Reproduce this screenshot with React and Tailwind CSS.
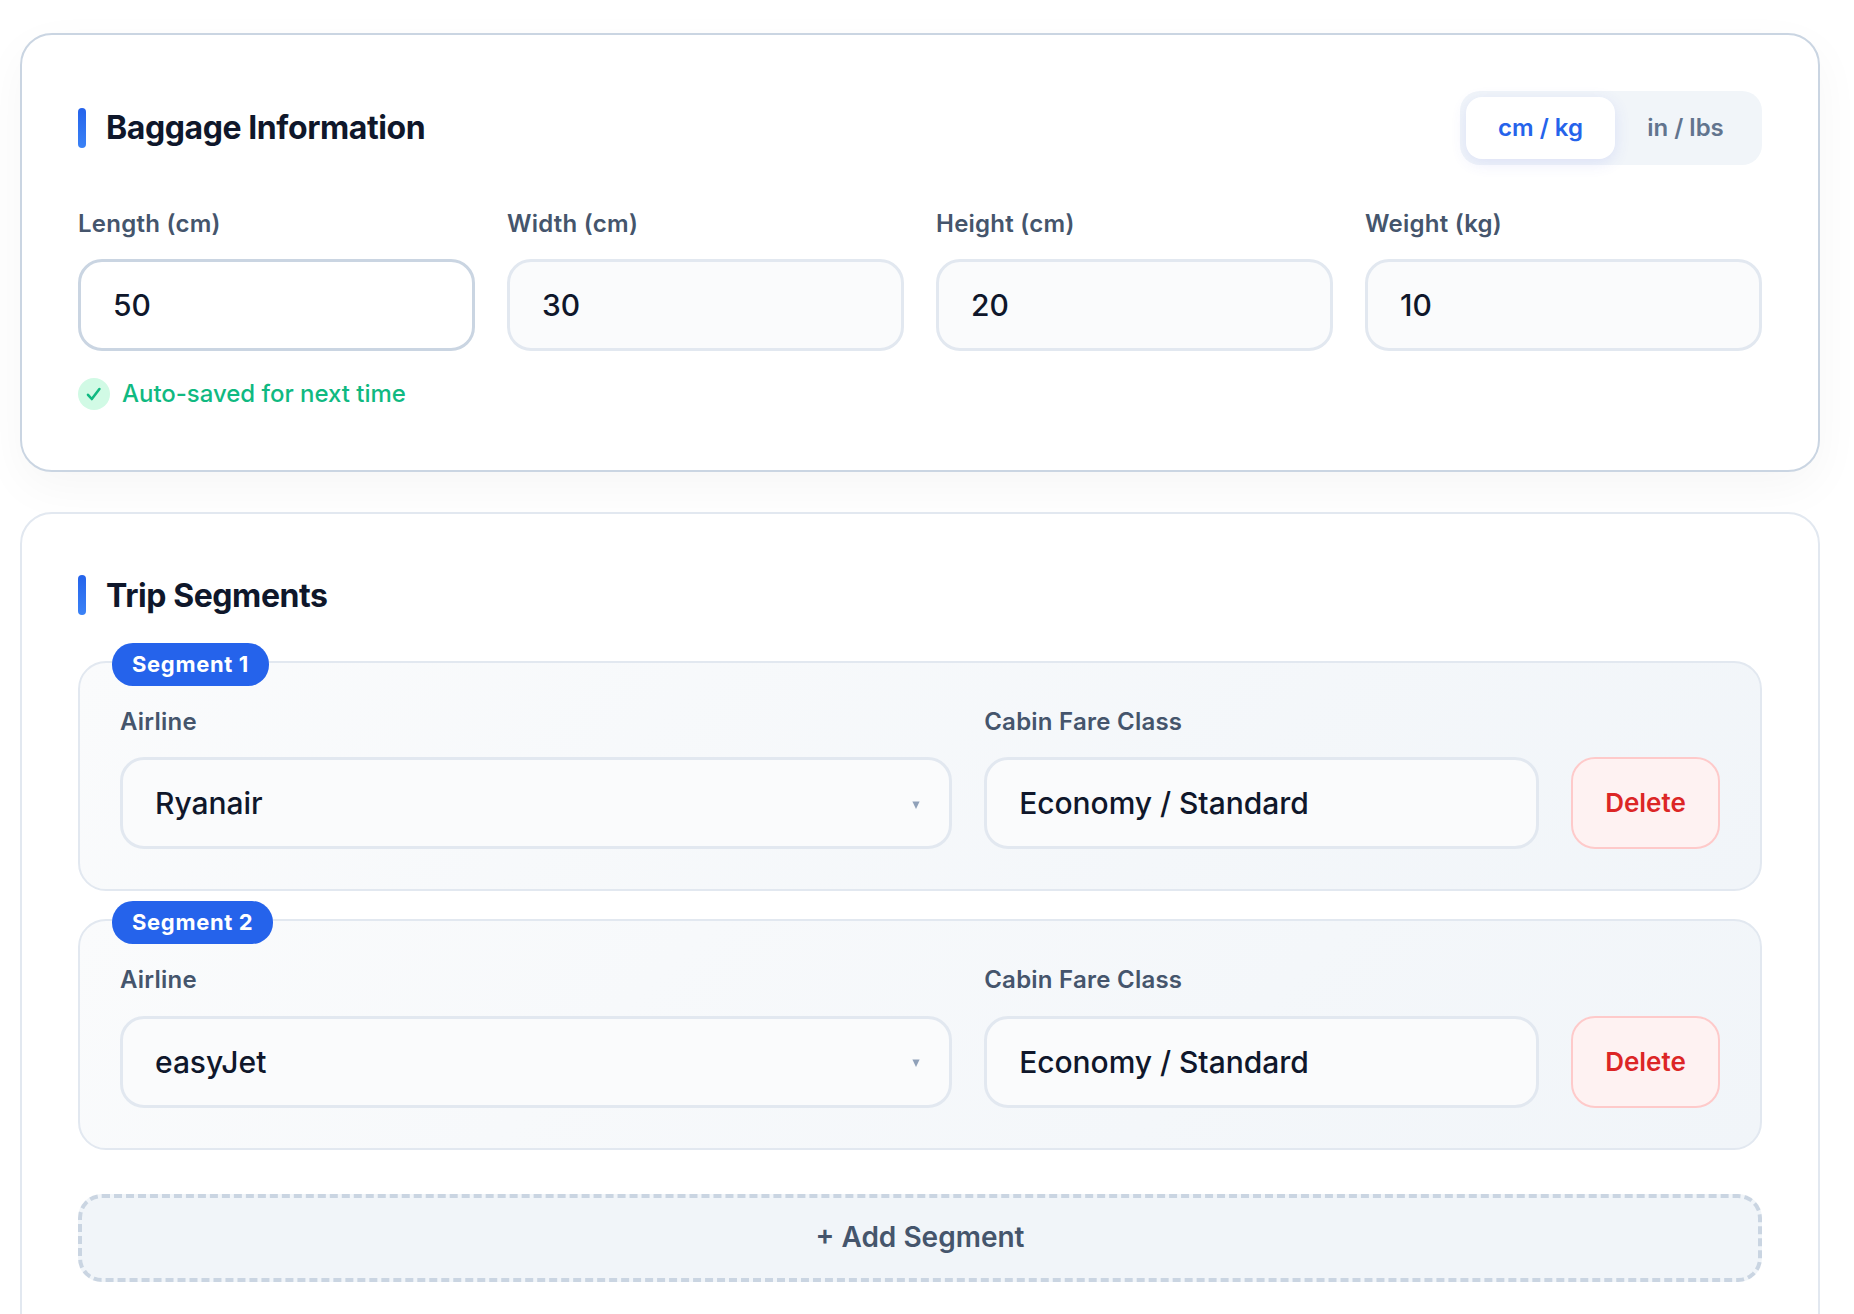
import { useState } from 'react';

const dimensions = [
  { key: 'length', label: 'Length', value: '50', active: true },
  { key: 'width', label: 'Width', value: '30' },
  { key: 'height', label: 'Height', value: '20' },
  { key: 'weight', label: 'Weight', value: '10' },
];

const labelClass = 'block mb-4 text-[24px] leading-[38.4px] font-semibold tracking-[0.24px] text-slate-600';
const fieldClass =
  'block w-full h-[92px] rounded-[24px] border-[3px] px-8 text-[30px] font-medium tracking-[-0.04px] text-slate-900 outline-none appearance-none';

function SectionTitle({ children }) {
  return (
    <h2 className="flex items-center gap-5 text-[32px] leading-[50px] font-bold tracking-[-0.42px] text-slate-900">
      <span className="w-2 h-10 rounded-[4px] bg-linear-to-b from-[#2563eb] to-[#3b82f6]" />
      {children}
    </h2>
  );
}

function Segment({ index, segment, onChange, onDelete }) {
  return (
    <div className="relative rounded-[28px] border-2 border-slate-200 bg-linear-135 from-[#fafbfc] to-[#f1f5f9] p-10">
      <span className="absolute -top-5 left-8 h-[43px] rounded-[21px] bg-[#2563eb] px-5 text-[22px] leading-[43px] font-bold tracking-[0.66px] text-white">
        Segment {index + 1}
      </span>
      <div className="grid grid-cols-[1.5fr_1fr_149px] items-end gap-8">
        <div>
          <label className={labelClass}>Airline</label>
          <div className="relative">
            <input
              className={`${fieldClass} border-slate-200 bg-[#fafbfc]`}
              value={segment.airline}
              onChange={(e) => onChange({ ...segment, airline: e.target.value })}
            />
            <svg className="absolute right-[32px] top-[43.5px] w-[8px] h-[8px] fill-slate-400" viewBox="0 0 8 8">
              <path d="M0.4 0.5H7.6L4 7.9Z" />
            </svg>
          </div>
        </div>
        <div>
          <label className={labelClass}>Cabin Fare Class</label>
          <input
            className={`${fieldClass} border-slate-200 bg-[#fafbfc]`}
            value={segment.fare}
            onChange={(e) => onChange({ ...segment, fare: e.target.value })}
          />
        </div>
        <button
          onClick={onDelete}
          className="h-[92px] rounded-[24px] border-2 border-[#fecaca] bg-[#fef2f2] pb-px text-[26px] font-semibold text-[#dc2626]"
        >
          Delete
        </button>
      </div>
    </div>
  );
}

function App() {
  const [unit, setUnit] = useState('metric');
  const [values, setValues] = useState(Object.fromEntries(dimensions.map((d) => [d.key, d.value])));
  const [segments, setSegments] = useState([
    { airline: 'Ryanair', fare: 'Economy / Standard' },
    { airline: 'easyJet', fare: 'Economy / Standard' },
  ]);

  const unitFor = (key) => {
    if (key === 'weight') return unit === 'metric' ? 'kg' : 'lbs';
    return unit === 'metric' ? 'cm' : 'in';
  };

  const unitClass = (name) =>
    unit === name
      ? 'bg-white text-[#2563eb] shadow-[0_4px_16px_rgba(67,85,232,0.12)]'
      : 'text-slate-500';

  return (
    <div className="h-screen overflow-hidden bg-white pt-[33px] pl-5 pr-[34px] font-['Inter',sans-serif]">
      <section className="h-[439px] rounded-[32px] border-2 border-slate-300 bg-white p-14 shadow-[0_16px_48px_rgba(0,0,0,0.04)]">
        <div className="flex items-center justify-between mb-10">
          <SectionTitle>Baggage Information</SectionTitle>
          <div className="flex h-[74px] rounded-[20px] bg-slate-100 p-1.5 text-[24px] font-semibold">
            <button onClick={() => setUnit('metric')} className={`w-[149px] rounded-[16px] ${unitClass('metric')}`}>
              cm / kg
            </button>
            <button onClick={() => setUnit('imperial')} className={`w-[141px] rounded-[16px] ${unitClass('imperial')}`}>
              in / lbs
            </button>
          </div>
        </div>

        <div className="grid grid-cols-4 gap-8">
          {dimensions.map((d) => (
            <div key={d.key}>
              <label className={labelClass}>
                {d.label} ({unitFor(d.key)})
              </label>
              <input
                className={`${fieldClass} ${d.active ? 'border-slate-300 bg-white' : 'border-slate-200 bg-[#fafbfc]'}`}
                value={values[d.key]}
                onChange={(e) => setValues({ ...values, [d.key]: e.target.value })}
              />
            </div>
          ))}
        </div>

        <div className="mt-6 flex items-center gap-3 text-[24px] leading-[38px] font-medium tracking-[-0.03px] text-[#10b981]">
          <span className="flex items-center justify-center w-8 h-8 rounded-full bg-[#d1fae5]">
            <svg className="w-4 h-4" viewBox="0 0 16 16" fill="none" stroke="currentColor">
              <path d="M2 8.8L5.8 13L13.4 3" strokeWidth="2.6" strokeLinecap="round" strokeLinejoin="round" />
            </svg>
          </span>
          Auto-saved for next time
        </div>
      </section>

      <section className="mt-10 h-[900px] rounded-[32px] border-2 border-slate-200 bg-white p-14">
        <SectionTitle>
          <span className="mt-px -mb-px">Trip Segments</span>
        </SectionTitle>
        <div className="mt-[41px] flex flex-col gap-7">
          {segments.map((segment, i) => (
            <Segment
              key={i}
              index={i}
              segment={segment}
              onChange={(next) => setSegments(segments.map((s, j) => (j === i ? next : s)))}
              onDelete={() => setSegments(segments.filter((_, j) => j !== i))}
            />
          ))}
        </div>
        <button
          onClick={() => setSegments([...segments, { airline: '', fare: 'Economy / Standard' }])}
          className="mt-11 block w-full h-[88px] rounded-[24px] border-4 border-dashed border-slate-300 bg-slate-100 pb-px text-[28px] font-semibold text-slate-600"
        >
          + Add Segment
        </button>
      </section>
    </div>
  );
}

export default App;
